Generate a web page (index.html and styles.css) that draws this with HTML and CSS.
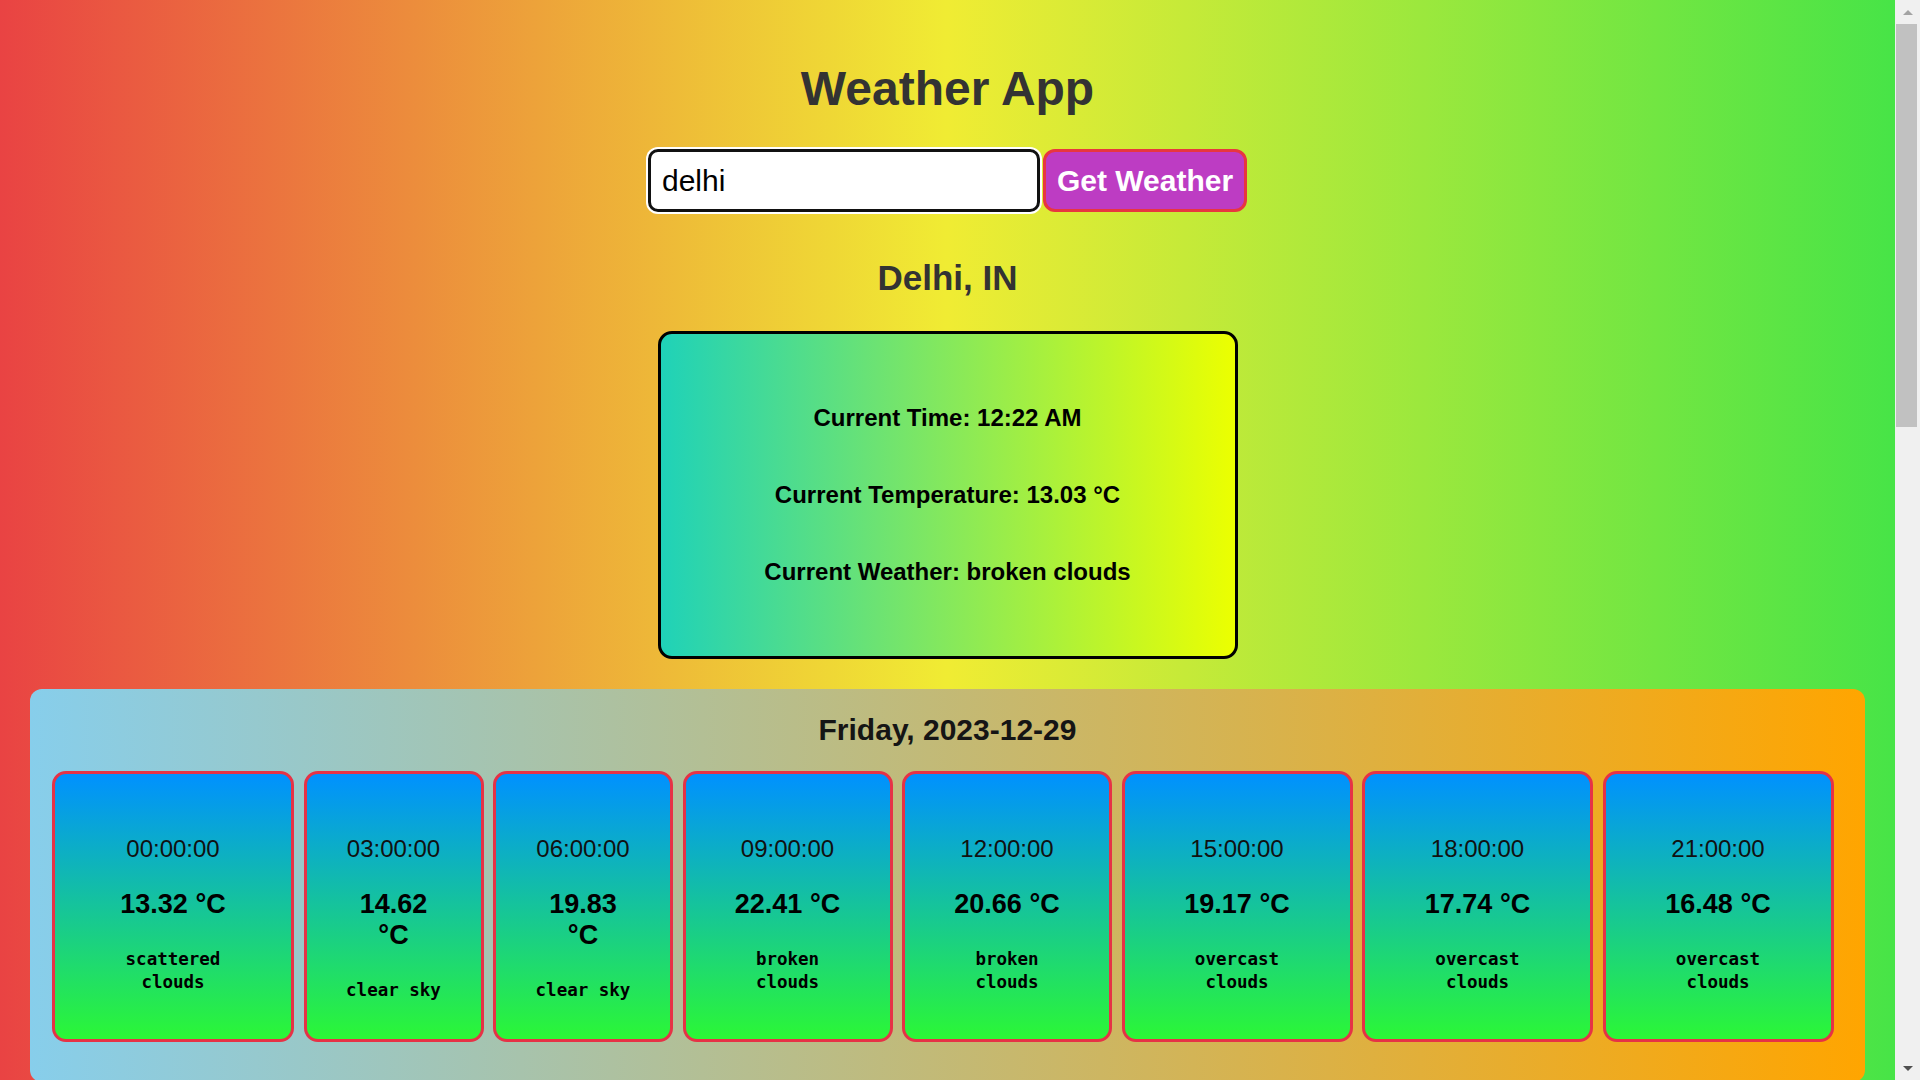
FILE: index.html
```html
<!DOCTYPE html>
<html lang="en">
<head>
<meta charset="utf-8">
<title>Weather App</title>
<link rel="stylesheet" href="styles.css">
</head>
<body>
<div class="window">
  <main class="page">
    <h1 class="title">Weather App</h1>
    <div class="search">
      <input class="search-input" type="text" value="delhi">
      <button class="search-btn" type="button">Get Weather</button>
    </div>
    <h2 class="city">Delhi, IN</h2>
    <section class="current">
      <p>Current Time: 12:22 AM</p>
      <p>Current Temperature: 13.03 °C</p>
      <p>Current Weather: broken clouds</p>
    </section>
    <section class="day">
      <h3 class="day-title">Friday, 2023-12-29</h3>
      <div class="forecast">
        <div class="card card--xl">
          <p class="card-time">00:00:00</p>
          <p class="card-temp">13.32 °C</p>
          <p class="card-desc">scattered clouds</p>
        </div>
        <div class="card card--sm">
          <p class="card-time">03:00:00</p>
          <p class="card-temp">14.62 °C</p>
          <p class="card-desc">clear sky</p>
        </div>
        <div class="card card--sm">
          <p class="card-time">06:00:00</p>
          <p class="card-temp">19.83 °C</p>
          <p class="card-desc">clear sky</p>
        </div>
        <div class="card card--md">
          <p class="card-time">09:00:00</p>
          <p class="card-temp">22.41 °C</p>
          <p class="card-desc">broken clouds</p>
        </div>
        <div class="card card--md">
          <p class="card-time">12:00:00</p>
          <p class="card-temp">20.66 °C</p>
          <p class="card-desc">broken clouds</p>
        </div>
        <div class="card card--lg">
          <p class="card-time">15:00:00</p>
          <p class="card-temp">19.17 °C</p>
          <p class="card-desc">overcast clouds</p>
        </div>
        <div class="card card--lg">
          <p class="card-time">18:00:00</p>
          <p class="card-temp">17.74 °C</p>
          <p class="card-desc">overcast clouds</p>
        </div>
        <div class="card card--lg">
          <p class="card-time">21:00:00</p>
          <p class="card-temp">16.48 °C</p>
          <p class="card-desc">overcast clouds</p>
        </div>
      </div>
    </section>
  </main>
  <div class="scrollbar" aria-hidden="true">
    <div class="sb-btn"><span class="sb-arrow sb-arrow--up"></span></div>
    <div class="sb-thumb"></div>
    <div class="sb-track"></div>
    <div class="sb-btn"><span class="sb-arrow sb-arrow--down"></span></div>
  </div>
</div>
</body>
</html>
```

FILE: styles.css
```css
html, body {
  margin: 0;
  height: 100%;
  overflow: hidden;
}

body {
  font-family: "Liberation Sans", Arial, sans-serif;
}

.window {
  display: flex;
  height: 1080px;
}

.page {
  flex: 1;
  height: 100%;
  overflow: hidden;
  display: flex;
  flex-direction: column;
  align-items: center;
  background: linear-gradient(to right, #e94343, #f0ec33, #47e447);
}

.page > * {
  flex: none;
}

.title {
  margin: 61px 0 0;
  font-size: 48px;
  line-height: 55px;
  font-weight: bold;
  color: #333;
}

.search {
  display: flex;
  gap: 3px;
  margin-top: 33px;
}

.search-input {
  box-sizing: border-box;
  width: 392px;
  height: 63px;
  padding: 0 11px;
  border: 3px solid #111;
  border-radius: 10px;
  background: #fff;
  color: #000;
  font: 30px "Liberation Sans", Arial, sans-serif;
  box-shadow: 0 0 0 2px #fff;
  outline: none;
}

.search-btn {
  box-sizing: border-box;
  width: 204px;
  height: 63px;
  padding: 0;
  border: 3px solid #e8363f;
  border-radius: 12px;
  background: #bd3cc3;
  color: #fff;
  font: bold 30px "Liberation Sans", Arial, sans-serif;
}

.city {
  margin: 46px 0 0;
  font-size: 35px;
  line-height: 40px;
  font-weight: bold;
  color: #333;
}

.current {
  box-sizing: border-box;
  width: 580px;
  height: 328px;
  margin-top: 33px;
  border: 3px solid #000;
  border-radius: 14px;
  background: linear-gradient(to right, #1fd2b8, #ecff00);
  display: flex;
  flex-direction: column;
  justify-content: center;
  align-items: center;
  gap: 49px;
}

.current p {
  margin: 0;
  font-size: 24px;
  line-height: 28px;
  font-weight: bold;
  color: #000;
}

.day {
  box-sizing: border-box;
  align-self: stretch;
  margin: 30px 30px 0;
  padding: 24px 22px 40px;
  border-radius: 12px;
  background: linear-gradient(to right, #87ceeb, #ffa500);
}

.day-title {
  margin: 0;
  text-align: center;
  font-size: 30px;
  line-height: 34px;
  font-weight: bold;
  color: #151515;
}

.forecast {
  display: flex;
  gap: 9.5px;
  margin-top: 24px;
}

.card {
  box-sizing: border-box;
  flex: none;
  height: 271px;
  padding: 61px 36px 0;
  border: 3px solid #e63246;
  border-radius: 14px;
  background: linear-gradient(to bottom, #0091ff, #2bf736);
  text-align: center;
}

.card--xl { width: 242px; }
.card--sm { width: 180px; }
.card--md { width: 210px; }
.card--lg { width: 231px; }

.card-time {
  margin: 0;
  font-size: 24px;
  line-height: 28px;
  color: #111;
}

.card-temp {
  margin: 26px 0 0;
  font-size: 27px;
  line-height: 31px;
  font-weight: bold;
  color: #000;
}

.card-desc {
  margin: 28px 0 0;
  font-family: "DejaVu Sans Mono", "Liberation Mono", monospace;
  font-size: 17.5px;
  line-height: 23px;
  font-weight: bold;
  color: #000;
}

/* fake browser scrollbar */
.scrollbar {
  width: 25px;
  height: 100%;
  display: flex;
  flex-direction: column;
  align-items: center;
  background: #f0f0f0;
}

.sb-btn {
  width: 100%;
  height: 24px;
  display: flex;
  align-items: center;
  justify-content: center;
  flex: none;
}

.sb-arrow {
  width: 0;
  height: 0;
  border-left: 5.5px solid transparent;
  border-right: 5.5px solid transparent;
}

.sb-arrow--up {
  border-bottom: 5px solid #a3a3a3;
}

.sb-arrow--down {
  border-top: 5px solid #505050;
}

.sb-thumb {
  width: 21px;
  height: 403px;
  margin-left: -2px;
  flex: none;
  background: #c1c1c1;
}

.sb-track {
  flex: 1;
}
```
